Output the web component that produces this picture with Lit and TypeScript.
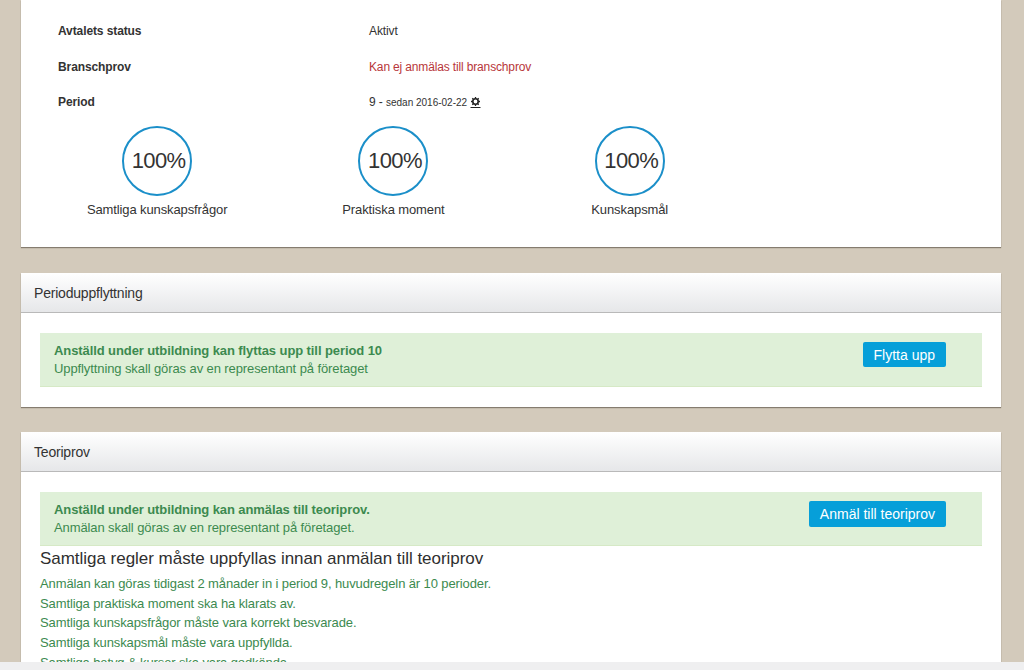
import { LitElement, html, css } from 'lit';
import { customElement } from 'lit/decorators.js';

const stats = ['Samtliga kunskapsfrågor', 'Praktiska moment', 'Kunskapsmål'];
const rules = [
  'Anmälan kan göras tidigast 2 månader in i period 9, huvudregeln är 10 perioder.',
  'Samtliga praktiska moment ska ha klarats av.',
  'Samtliga kunskapsfrågor måste vara korrekt besvarade.',
  'Samtliga kunskapsmål måste vara uppfyllda.',
  'Samtliga betyg & kurser ska vara godkända.',
];

@customElement('app-root')
export class AppRoot extends LitElement {
  static styles = css`
    * {
      margin: 0;
      padding: 0;
      box-sizing: border-box;
    }

    :host {
      display: block;
      position: relative;
      height: 670px;
      overflow: hidden;
      background: #d3cabb;
      color: #333;
      font-family: 'Liberation Sans', Arial, sans-serif;
      font-size: 12px;
    }

    .page {
      display: flex;
      flex-direction: column;
      gap: 25px;
      padding: 0 23px 0 21px;
    }

    .panel {
      background: #fff;
      box-shadow: 0 1px 1px rgba(70, 60, 50, 0.55);
    }

    .details {
      height: 247px;
      margin-bottom: 1px;
      padding: 14px 37px 0 37px;
    }

    .row {
      display: grid;
      grid-template-columns: 311px 1fr;
      height: 35.5px;
      line-height: 35px;
      letter-spacing: -0.1px;
    }

    .row b {
      font-weight: bold;
    }

    .red {
      color: #b8363a;
      letter-spacing: -0.15px;
    }

    .since {
      font-size: 10px;
      letter-spacing: 0;
    }

    .gear {
      width: 11px;
      height: 11px;
      vertical-align: -2px;
    }

    .stats {
      display: grid;
      grid-template-columns: repeat(3, 236.3px);
      margin: 5px 0 0 -19px;
    }

    .stat {
      display: flex;
      flex-direction: column;
      align-items: center;
    }

    .circle {
      width: 70px;
      height: 70px;
      padding-left: 3px;
      border: 2px solid #1b8fc9;
      border-radius: 50%;
      display: flex;
      align-items: center;
      justify-content: center;
      font-size: 22px;
      letter-spacing: -0.6px;
      white-space: nowrap;
    }

    .stat span {
      margin-top: 6px;
      font-size: 13px;
      line-height: 16px;
      letter-spacing: -0.11px;
    }

    .head {
      height: 40px;
      padding-left: 13px;
      display: flex;
      align-items: center;
      font-size: 14px;
      letter-spacing: -0.2px;
      background: linear-gradient(#ffffff, #e6e7e9);
      border-bottom: 1px solid #b9b9b9;
    }

    .body {
      padding: 20px 19px 20px;
    }

    .alert {
      display: flex;
      justify-content: space-between;
      height: 54px;
      padding: 9px 36px 0 14px;
      background: #dff0d8;
      border-bottom: 1px solid #d6e9c6;
      color: #3c8a4f;
      font-size: 13px;
      line-height: 18px;
      letter-spacing: -0.1px;
    }

    .alert b {
      display: block;
      letter-spacing: -0.09px;
    }

    button {
      align-self: flex-start;
      height: 25px;
      padding: 0 11px;
      border: 0;
      border-radius: 2px;
      background: #069fd9;
      color: #fff;
      font: 14px 'Liberation Sans', Arial, sans-serif;
    }

    .teori .alert {
      margin-bottom: 3px;
    }

    .teori button {
      height: 26px;
    }

    h4 {
      font-size: 17px;
      font-weight: normal;
      line-height: 20px;
      margin-bottom: 5px;
      letter-spacing: -0.03px;
      color: #2f2f2f;
    }

    .rules {
      list-style: none;
      color: #3c8a4f;
      font-size: 13px;
      line-height: 19.7px;
      letter-spacing: -0.11px;
    }

    .strip {
      position: absolute;
      left: 0;
      right: 0;
      bottom: 0;
      height: 8px;
      background: #efeff0;
    }
  `;

  render() {
    return html`
      <div class="page">
        <section class="panel details">
          <div class="row"><b>Avtalets status</b><span>Aktivt</span></div>
          <div class="row">
            <b>Branschprov</b
            ><span class="red">Kan ej anmälas till branschprov</span>
          </div>
          <div class="row">
            <b>Period</b>
            <span
              >9 - <span class="since">sedan 2016-02-22</span>
              <svg class="gear" viewBox="0 0 11 11" aria-hidden="true">
                <circle
                  cx="5.5"
                  cy="4.500"
                  r="2.700"
                  fill="none"
                  stroke="#222"
                  stroke-width="1.600"
                />
                <path
                  stroke="#222"
                  stroke-width="1.300"
                  d="M5.500 0v1.500M5.500 7.500V9M1 4.500h1.500M8.500 4.500H10M2.300 1.300l1 1M7.700 6.700l1 1M2.300 7.700l1-1M7.700 2.300l1-1"
                />
                <rect x="0.500" y="10" width="10" height="1" fill="#222" />
              </svg></span
            >
          </div>
          <div class="stats">
            ${stats.map(
              (label) => html`
                <div class="stat">
                  <div class="circle">100%</div>
                  <span>${label}</span>
                </div>
              `,
            )}
          </div>
        </section>

        <section class="panel">
          <div class="head">Perioduppflyttning</div>
          <div class="body">
            <div class="alert">
              <div>
                <b>Anställd under utbildning kan flyttas upp till period 10</b>
                Uppflyttning skall göras av en representant på företaget
              </div>
              <button>Flytta upp</button>
            </div>
          </div>
        </section>

        <section class="panel teori">
          <div class="head">Teoriprov</div>
          <div class="body">
            <div class="alert">
              <div>
                <b>Anställd under utbildning kan anmälas till teoriprov.</b>
                Anmälan skall göras av en representant på företaget.
              </div>
              <button>Anmäl till teoriprov</button>
            </div>
            <h4>Samtliga regler måste uppfyllas innan anmälan till teoriprov</h4>
            <ul class="rules">
              ${rules.map((rule) => html`<li>${rule}</li>`)}
            </ul>
          </div>
        </section>
      </div>
      <div class="strip"></div>
    `;
  }
}
